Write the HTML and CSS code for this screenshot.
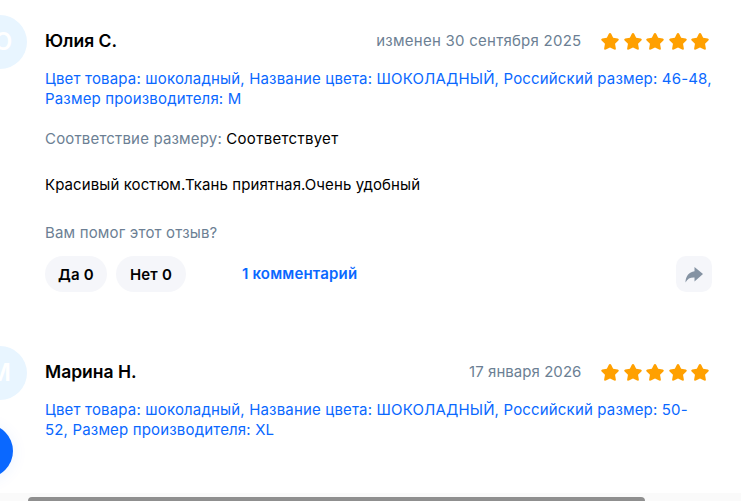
FILE: index.html
```html
<!DOCTYPE html>
<html lang="ru">
<head>
    <meta charset="UTF-8">
    <title>Отзывы</title>
    <link rel="stylesheet" href="styles.css">
</head>
<body>
    <svg class="icon-defs" width="0" height="0">
        <symbol id="star" viewBox="0 0 20 20">
            <path d="M10 1c.6 0 1 .3 1.300.9L13.500 6.500L18.600 7.200C19.800 7.400 20.100 8.700 19.300 9.500L15.600 13.100L16.500 18.200C16.700 19.400 15.600 20 14.600 19.500L10 17.100L5.400 19.500C4.400 20 3.300 19.400 3.500 18.200L4.400 13.100L.7 9.500C-.1 8.700 .2 7.400 1.400 7.200L6.500 6.500L8.700 1.900C9 1.300 9.400 1 10 1z"/>
        </symbol>
    </svg>

    <div class="reviews">
        <div class="review">
            <div class="avatar">Ю</div>
            <div class="review-body">
                <div class="review-head">
                    <span class="name">Юлия С.</span>
                    <span class="date">изменен 30 сентября 2025</span>
                    <div class="stars">
                        <svg><use href="#star"/></svg>
                        <svg><use href="#star"/></svg>
                        <svg><use href="#star"/></svg>
                        <svg><use href="#star"/></svg>
                        <svg><use href="#star"/></svg>
                    </div>
                </div>
                <p class="props">Цвет товара: шоколадный, Название цвета: ШОКОЛАДНЫЙ, Российский размер: 46-48, Размер производителя: M</p>
                <p class="fit"><span class="muted">Соответствие размеру:</span> <span class="fit-value">Соответствует</span></p>
                <p class="text">Красивый костюм.Ткань приятная.Очень удобный</p>
                <p class="muted helpful">Вам помог этот отзыв?</p>
                <div class="actions">
                    <button class="vote">Да 0</button>
                    <button class="vote vote-no">Нет 0</button>
                    <a class="comments" href="#">1 комментарий</a>
                    <button class="share">
                        <svg width="20" height="20" viewBox="0 0 20 20"><path d="M10.500 3L19 10L10.500 17.500V13.500C6.500 13.300 3.500 14.500 1.500 18.500C1.500 12.500 5 7.800 10.500 7.200z"/></svg>
                    </button>
                </div>
            </div>
        </div>

        <div class="review">
            <div class="avatar">М</div>
            <div class="review-body">
                <div class="review-head">
                    <span class="name">Марина Н.</span>
                    <span class="date date-short">17 января 2026</span>
                    <div class="stars">
                        <svg><use href="#star"/></svg>
                        <svg><use href="#star"/></svg>
                        <svg><use href="#star"/></svg>
                        <svg><use href="#star"/></svg>
                        <svg><use href="#star"/></svg>
                    </div>
                </div>
                <p class="props">Цвет товара: шоколадный, Название цвета: ШОКОЛАДНЫЙ, Российский размер: 50-<br>52, Размер производителя: XL</p>
            </div>
        </div>
    </div>

    <div class="float-btn"></div>
    <div class="scrollbar"><div class="scrollbar-thumb"></div></div>
</body>
</html>
```

FILE: styles.css
```css
html, body {
    height: 100%;
}
body {
    margin: 0;
    background-color: #fff;
    font-family: 'Inter', sans-serif;
    font-size: 15px;
    line-height: 20px;
    letter-spacing: 0.17px;
    color: #000;
    overflow: hidden;
    position: relative;
}
.icon-defs {
    position: absolute;
}
.reviews {
    display: flex;
    flex-direction: column;
    gap: 54px;
    padding: 15px 29px 0 0;
    margin-left: -27px;
}
.review {
    display: flex;
    gap: 18px;
}
.avatar {
    flex: none;
    width: 54px;
    height: 54px;
    border-radius: 50%;
    background-color: #e8f5ff;
    color: #fff;
    font-size: 24px;
    font-weight: 600;
    display: flex;
    align-items: center;
    justify-content: center;
}
.review-body {
    flex: 1;
    min-width: 0;
}
.review-head {
    display: flex;
    align-items: center;
    height: 52px;
    margin-bottom: 2px;
}
.name {
    font-size: 17.5px;
    font-weight: 600;
    letter-spacing: 0;
    margin-right: auto;
}
.date {
    color: #6c7f94;
    letter-spacing: 0.25px;
}
.date-short {
    letter-spacing: 0.05px;
}
.stars {
    display: flex;
    gap: 4.4px;
    margin-left: 20px;
    margin-right: 3px;
}
.stars svg {
    width: 18px;
    height: 18px;
    fill: #ffa000;
}
p {
    margin: 0;
}
.props {
    color: #0a68ff;
    letter-spacing: 0.165px;
}
.fit {
    margin-top: 20px;
}
.fit-value {
    letter-spacing: 0.3px;
}
.muted {
    color: #6c7f94;
}
.text {
    margin-top: 26px;
    letter-spacing: 0.09px;
}
.helpful {
    margin-top: 28px;
}
.actions {
    display: flex;
    align-items: center;
    margin-top: 13px;
}
button {
    border: none;
    font-family: inherit;
    cursor: pointer;
}
.vote {
    height: 36px;
    padding: 0 13px;
    margin-right: 9px;
    border-radius: 18px;
    background-color: #f5f6fa;
    font-size: 15px;
    font-weight: 600;
    letter-spacing: 0.2px;
    color: #000;
}
.vote-no {
    padding: 0 14px;
}
.comments {
    margin-left: 47px;
    font-weight: 600;
    color: #0a68ff;
    text-decoration: none;
}
.share {
    margin-left: auto;
    width: 36px;
    height: 36px;
    padding: 0;
    border-radius: 10px;
    background-color: #f5f6fa;
    display: flex;
    align-items: center;
    justify-content: center;
}
.share svg {
    fill: #8593a3;
}
.float-btn {
    position: absolute;
    left: -41px;
    top: 424px;
    width: 54px;
    height: 54px;
    border-radius: 50%;
    background-color: #0a68ff;
    box-shadow: 0 2px 16px rgba(10, 104, 255, 0.08);
}
.scrollbar {
    position: absolute;
    left: 0;
    right: 0;
    bottom: 0;
    height: 8px;
    background-color: #fafafa;
}
.scrollbar-thumb {
    position: absolute;
    left: 28px;
    bottom: 0;
    width: 617px;
    height: 4px;
    border-radius: 4px 4px 0 0;
    background-color: #8f8f8f;
}
```
